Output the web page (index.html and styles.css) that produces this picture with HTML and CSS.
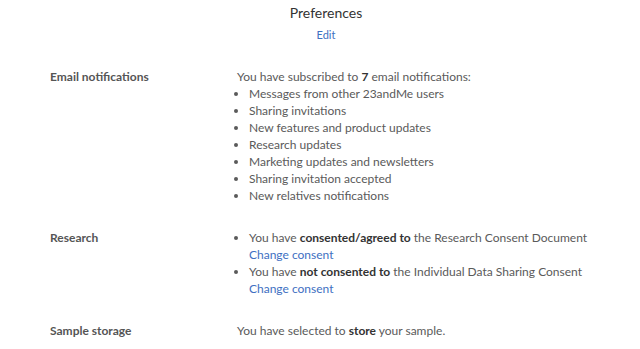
FILE: index.html
```html
<!DOCTYPE html>
<html lang="en">
<head>
    <meta charset="UTF-8">
    <title>Preferences</title>
    <link rel="stylesheet" href="styles.css">
</head>
<body>
    <div class="prefs">
        <div class="prefs-header">
            <h2>Preferences</h2>
            <a href="#" class="link edit-link">Edit</a>
        </div>

        <div class="pref-row">
            <div class="pref-label">Email notifications</div>
            <div class="pref-value">
                <p>You have subscribed to <strong>7</strong> email notifications:</p>
                <ul>
                    <li>Messages from other 23andMe users</li>
                    <li>Sharing invitations</li>
                    <li>New features and product updates</li>
                    <li>Research updates</li>
                    <li>Marketing updates and newsletters</li>
                    <li>Sharing invitation accepted</li>
                    <li>New relatives notifications</li>
                </ul>
            </div>
        </div>

        <div class="pref-row">
            <div class="pref-label">Research</div>
            <div class="pref-value">
                <ul>
                    <li>You have <strong>consented/agreed to</strong> the Research Consent Document<br>
                        <a href="#" class="link">Change consent</a></li>
                    <li>You have <strong>not consented to</strong> the Individual Data Sharing Consent<br>
                        <a href="#" class="link">Change consent</a></li>
                </ul>
            </div>
        </div>

        <div class="pref-row">
            <div class="pref-label">Sample storage</div>
            <div class="pref-value">
                <p>You have selected to <strong>store</strong> your sample.</p>
            </div>
        </div>
    </div>
</body>
</html>
```

FILE: styles.css
```css
body {
    margin: 0;
    font-family: Lato, "Noto Sans", sans-serif;
    font-size: 12px;
    line-height: 17px;
    color: #5a5a5a;
    background: #fff;
}
.prefs {
    width: 640px;
    padding-top: 4px;
}
.prefs-header {
    text-align: center;
    margin-bottom: 25px;
}
.prefs-header h2 {
    margin: 0 0 4px 12px;
    font-size: 14px;
    font-weight: normal;
    line-height: 18px;
    color: #333;
}
.link {
    color: #3e6fc2;
    text-decoration: none;
}
.edit-link {
    font-size: 11px;
    margin-left: 12px;
}
.pref-row {
    display: grid;
    grid-template-columns: 187px 1fr;
    padding-left: 50px;
    margin-bottom: 25px;
}
.pref-label {
    font-weight: bold;
    color: #555;
}
.pref-value p {
    margin: 0;
}
.pref-value strong {
    color: #333;
}
.pref-value ul {
    margin: 0;
    padding-left: 12px;
}
.pref-value li {
    margin: 0;
}
```
